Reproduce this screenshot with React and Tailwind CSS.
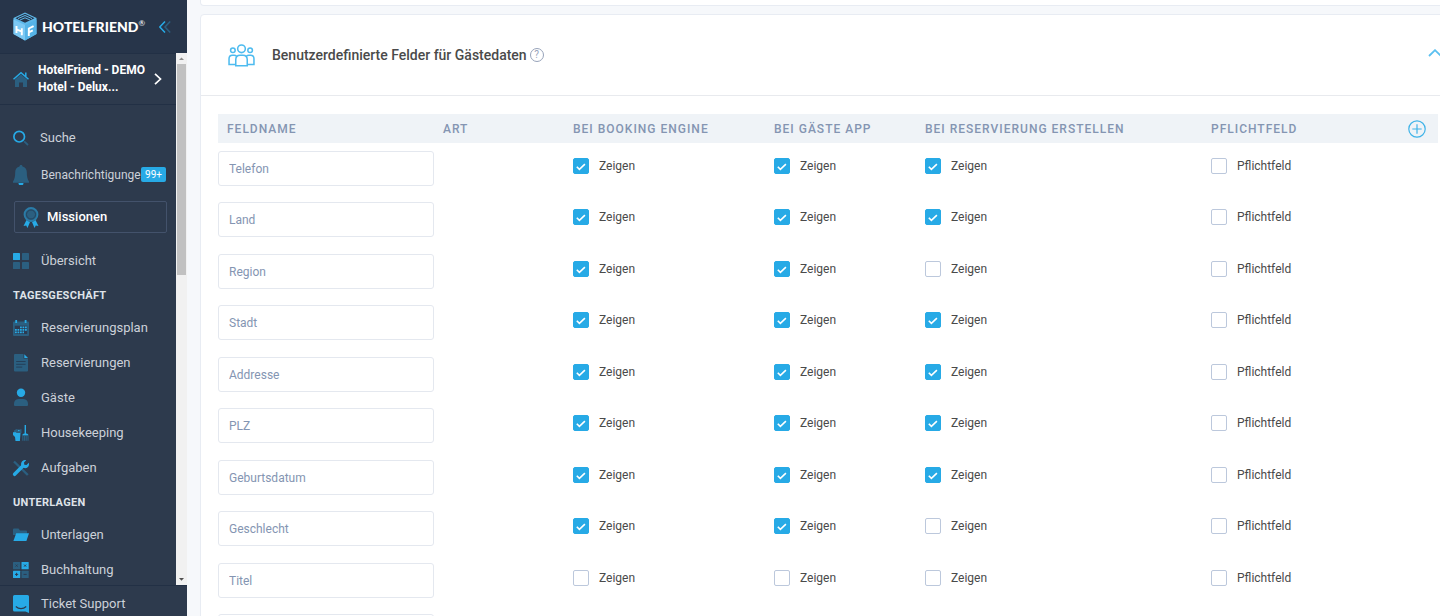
import { useState } from 'react'

const initialFields = [
  { id: 'phone', name: 'Telefon', booking: true, app: true, reservation: true },
  { id: 'country', name: 'Land', booking: true, app: true, reservation: true },
  { id: 'region', name: 'Region', booking: true, app: true, reservation: false },
  { id: 'city', name: 'Stadt', booking: true, app: true, reservation: true },
  { id: 'address', name: 'Addresse', booking: true, app: true, reservation: true },
  { id: 'zip', name: 'PLZ', booking: true, app: true, reservation: true },
  { id: 'birthday', name: 'Geburtsdatum', booking: true, app: true, reservation: true },
  { id: 'gender', name: 'Geschlecht', booking: true, app: true, reservation: false },
  { id: 'title', name: 'Titel', booking: false, app: false, reservation: false }
]

const BRIGHT = '#27aae6'
const DIM = '#2b5f80'

function Icon({ children }) {
  return (
    <svg viewBox="0 0 16 16" fill="none" className="h-4 w-4 shrink-0 overflow-visible" aria-hidden="true">
      {children}
    </svg>
  )
}

const icons = {
  search: (
    <>
      <path d="M11.2 11.4 15 15" stroke={DIM} strokeWidth="1.8" />
      <circle cx="6.2" cy="6.7" r="5.3" stroke={BRIGHT} strokeWidth="1.7" />
    </>
  ),
  overview: (
    <>
      <rect x="0" y="0" width="7" height="7" rx="0.6" fill={BRIGHT} />
      <rect x="9" y="0" width="7" height="7" rx="0.6" fill={DIM} />
      <rect x="0" y="9" width="7" height="7" rx="0.6" fill={DIM} />
      <rect x="9" y="9" width="7" height="7" rx="0.6" fill={DIM} />
    </>
  ),
  calendar: (
    <>
      <path d="M1 1.5h14a1 1 0 0 1 1 1V15a1 1 0 0 1-1 1H1a1 1 0 0 1-1-1V2.5a1 1 0 0 1 1-1Z" fill={DIM} />
      <path d="M1.8 5.7h12.4v8.3H1.8z" fill="#2d3a50" />
      <path d="M3.2 0v3M12.6 0v3" stroke={BRIGHT} strokeWidth="1.8" />
      <path d="M7 7.3h7M2 9.8h12M2 12.3h9" stroke={BRIGHT} strokeWidth="1.8" strokeDasharray="1.8 0.7" />
    </>
  ),
  document: (
    <>
      <path d="M2-1h8.5v4.5H15V15.5a1 1 0 0 1-1 1H2a1 1 0 0 1-1-1V0a1 1 0 0 1 1-1Z" fill={DIM} />
      <path d="M11.3-0.7 15 3h-3.7z" fill={BRIGHT} />
      <path d="M3.2 6.5h9.4M3.2 9.3h9.4M3.2 12.1h6" stroke="#253f58" strokeWidth="1" />
    </>
  ),
  guest: (
    <>
      <circle cx="8" cy="2.8" r="4.2" fill={BRIGHT} />
      <path d="M1 15v-1a5 5 0 0 1 4.5-5h5a5 5 0 0 1 4.5 5v1a1 1 0 0 1-1 1H2a1 1 0 0 1-1-1Z" fill={DIM} />
    </>
  ),
  cleaning: (
    <>
      <path d="M1 5.5 3.5 4l2 .8L8.5 4v4H1Z" fill={DIM} />
      <circle cx="5.8" cy="5.5" r="0.8" fill={BRIGHT} />
      <path d="M0 7.2h3l.5.8h4l-.6 8H2.5L2 12 0 10Z" fill={BRIGHT} />
      <path d="M12.3 0v10" stroke={BRIGHT} strokeWidth="1.4" />
      <path d="M9.3 10.5c0-1.5 1-2 3-2s3.1.5 3.1 2Z" fill={BRIGHT} />
      <path d="M9.8 10.8v5M11.5 10.8v5M13.2 10.8v5M15 10.8v5" stroke={DIM} strokeWidth="1.2" />
    </>
  ),
  tools: (
    <>
      <path d="M1 1.5 14.8 15" stroke={DIM} strokeWidth="2.4" />
      <path d="m1.6 14.3 8-8" stroke={BRIGHT} strokeWidth="3.5" strokeLinecap="round" />
      <path d="M13.2 0.3 11 2.5l.3 2.2 2.2.3 2.3-2.2c.8 2.6-.7 5.3-3.5 5.4-2.6 0-4.6-2.2-4.2-4.7.4-2.5 2.9-4 5.1-3.2Z" fill={BRIGHT} />
    </>
  ),
  folder: (
    <>
      <path d="M0 2.5a1 1 0 0 1 1-1h4.5l1.5 2h6a1 1 0 0 1 1 1V8H0Z" fill={DIM} />
      <path d="M3.2 6.2H16L13.4 14H0.4Z" fill={BRIGHT} />
    </>
  ),
  accounting: (
    <>
      <rect x="0" y="0" width="7.2" height="7.2" rx="0.5" fill={DIM} />
      <rect x="8.5" y="0" width="7.2" height="7.2" rx="0.5" fill={BRIGHT} />
      <rect x="0" y="8.8" width="7.2" height="7.2" rx="0.5" fill={BRIGHT} />
      <rect x="8.5" y="8.8" width="7.2" height="7.2" rx="0.5" fill={DIM} />
      <path d="m2.6 2.6 2 2m0-2-2 2M11.1 2.6l2 2m0-2-2 2M3.6 10.8v3.2M2 12.4h3.2M10.5 12.4h3.2" stroke="#2d3a50" strokeWidth="1" />
    </>
  )
}

const dayItems = [
  { label: 'Reservierungsplan', icon: 'calendar' },
  { label: 'Reservierungen', icon: 'document' },
  { label: 'Gäste', icon: 'guest' },
  { label: 'Housekeeping', icon: 'cleaning' },
  { label: 'Aufgaben', icon: 'tools' }
]

const documentItems = [
  { label: 'Unterlagen', icon: 'folder' },
  { label: 'Buchhaltung', icon: 'accounting' }
]

function NavItem({ label, icon }) {
  return (
    <a href="#" className="flex h-[35px] items-center gap-[11px] pl-[13px] text-[#ccd1d9]">
      <Icon>{icons[icon]}</Icon>
      <span className="pl-px">{label}</span>
    </a>
  )
}

function NavHeading({ children }) {
  return (
    <h2 className="flex h-8 items-center pt-1 pl-[13px] text-[11px] font-bold tracking-wide text-[#dfe3e9]">
      {children}
    </h2>
  )
}

function Logo() {
  return (
    <a href="#" className="flex items-center gap-[5px] text-white">
      <svg viewBox="0 0 24 29" className="h-[29px] w-6" aria-hidden="true">
        <path d="M12 0.5 23.5 6v16L12 28.5.5 22V6Z" fill="#5fb9ea" />
        <path d="M12 1.8 21.5 6.3 12 10.8 2.5 6.3Z" fill="#27354a" />
        <path d="M5 6.6 12 3.5l7 3.1" fill="none" stroke="#5fb9ea" strokeWidth="1" />
        <path d="M7 8 12 5.8 17 8" fill="none" stroke="#5fb9ea" strokeWidth="1" />
        <path d="M0.5 7.5 12 13V28.5L.5 22Z" fill="#7cc8f3" />
        <path d="M23.5 7.5 12 13V28.5L23.5 22Z" fill="#55b3e7" />
        <path d="M3.5 14v7M8.8 16.2v7M3.5 17.4l5.3 2.2" stroke="#fff" strokeWidth="1.9" />
        <path d="M15.8 24v-7.5l4.8-2.4M15.8 20.4l4-2" stroke="#fff" strokeWidth="1.9" fill="none" />
      </svg>
      <span className="flex items-start font-[Lato,sans-serif] text-sm leading-5 font-black">
        HOTELFRIEND
        <span className="text-[8px] leading-3 font-normal">®</span>
      </span>
    </a>
  )
}

function Sidebar() {
  return (
    <aside className="flex w-[187px] shrink-0 flex-col bg-[#2d3a4d] text-[13px]">
      <div className="flex h-[53px] shrink-0 items-center justify-between bg-[#27354a] pr-4 pl-[13px]">
        <Logo />
        <button type="button" aria-label="Menü einklappen">
          <svg viewBox="0 0 12 12" fill="none" className="h-3 w-3">
            <path d="M6 0.5.8 6 6 11.5" stroke={BRIGHT} strokeWidth="1.5" />
            <path d="M11.2 0.5 6 6l5.2 5.5" stroke={DIM} strokeWidth="1.5" />
          </svg>
        </button>
      </div>

      <div className="flex min-h-0 flex-1">
        <div className="min-w-0 flex-1 overflow-hidden">
          <button type="button" className="flex h-[52px] w-full items-center border-y border-[#223045] pl-[13px] text-left text-white">
            <Icon>
              <path d="M2 8.5 8 3.5l6 5V16H10v-4.5H6V16H2Z" fill={DIM} />
              <path d="M0.5 8.3 8 1.7l7.5 6.6M12.8 1.5v4" stroke={BRIGHT} strokeWidth="1.5" />
            </Icon>
            <span className="ml-[9px] flex-1 text-xs leading-[17px] font-bold whitespace-nowrap">
              HotelFriend - DEMO<br />Hotel - Delux...
            </span>
            <svg viewBox="0 0 8 12" fill="none" className="mr-[14px] h-3 w-2" aria-hidden="true">
              <path d="m1 0.8 5.5 5.2L1 11.2" stroke="#fff" strokeWidth="1.7" />
            </svg>
          </button>

          <nav className="pt-[14px]">
            <a href="#" className="flex h-[37px] items-center gap-[11px] pl-[13px] text-[#ccd1d9]">
              <Icon>{icons.search}</Icon>
              Suche
            </a>
            <a href="#" className="relative flex h-[37px] items-center gap-[11px] pl-[13px] text-xs text-[#ccd1d9]">
              <svg viewBox="0 0 16 20" className="h-5 w-4 shrink-0" aria-hidden="true">
                <path d="M5.5 18h5a2.5 2.5 0 0 1-5 0Z" fill={BRIGHT} />
                <path d="M8 0c.9 0 1.5.6 1.5 1.5 2.8.7 4.3 2.8 4.3 5.7 0 4.3.6 6.8 2.2 9.3v1.3H0v-1.3c1.6-2.5 2.2-5 2.2-9.3 0-2.9 1.5-5 4.3-5.7C6.5.6 7.1 0 8 0Z" fill={DIM} />
              </svg>
              <span className="pl-px">Benachrichtigunge</span>
              <span className="absolute right-[10px] rounded-xs bg-[#27aae6] px-1 text-[10px] leading-[15px] text-white">99+</span>
            </a>
            <a href="#" className="mt-2 mr-[9px] mb-[10px] ml-[14px] flex h-8 items-center gap-2 rounded-xs border border-[#43526b] pl-2 font-medium text-white">
              <svg viewBox="0 0 16 21" className="h-[21px] w-4 shrink-0" aria-hidden="true">
                <path d="m3.5 13-3 6 2.7-.5L4.5 21l2.5-6ZM12.5 13l3 6-2.7-.5L11.5 21 9 15Z" fill={BRIGHT} />
                <circle cx="8" cy="7.5" r="6.5" fill="#2b5f80" stroke="#2a7ca8" strokeWidth="1.8" />
                <circle cx="8" cy="7.5" r="4.5" fill="#2b5f80" stroke="#25435e" strokeWidth="1" />
              </svg>
              Missionen
            </a>
            <NavItem label="Übersicht" icon="overview" />

            <NavHeading>TAGESGESCHÄFT</NavHeading>
            {dayItems.map(item => (
              <NavItem key={item.label} {...item} />
            ))}

            <NavHeading>UNTERLAGEN</NavHeading>
            {documentItems.map(item => (
              <NavItem key={item.label} {...item} />
            ))}
          </nav>
        </div>

        {/* scrollbar */}
        <div className="flex w-[11px] flex-col items-center bg-[#f1f1f1]" aria-hidden="true">
          <svg viewBox="0 0 11 11" className="h-[11px] w-[11px]">
            <path d="M3 7h5L5.5 4.5Z" fill="#8b8b8b" />
          </svg>
          <div className="h-[211px] w-[9px] bg-[#c1c1c1]"></div>
          <svg viewBox="0 0 11 11" className="mt-auto h-[11px] w-[11px]">
            <path d="M3 4h5L5.5 6.8Z" fill="#505050" />
          </svg>
        </div>
      </div>

      <a href="#" className="flex h-[31px] shrink-0 items-center gap-[11px] border-t border-[#223045] pt-[5px] pl-[13px] text-[#ccd1d9]">
        <svg viewBox="0 0 16 18" fill="none" className="h-[18px] w-4 shrink-0" aria-hidden="true">
          <path d="M1.5 0h13A1.5 1.5 0 0 1 16 1.5V18l-3.5-1.5h-11A1.5 1.5 0 0 1 0 15V1.5A1.5 1.5 0 0 1 1.5 0Z" fill={BRIGHT} />
          <path d="M2.8 11.5c3 2.7 7.4 2.7 10.4 0" stroke="#2d3a4d" strokeWidth="1.2" />
        </svg>
        <span className="pl-px">Ticket Support</span>
      </a>
    </aside>
  )
}

function Checkbox({ label, checked, onChange }) {
  return (
    <label className="relative flex w-fit cursor-pointer items-start gap-[10px] pt-[7px] leading-4">
      <input
        type="checkbox"
        checked={checked}
        onChange={onChange}
        className="peer h-4 w-4 appearance-none rounded-xs border border-[#bcc8dc] bg-white checked:border-[#27aae6] checked:bg-[#27aae6]"
      />
      <svg viewBox="0 0 16 16" fill="none" className="pointer-events-none absolute left-0 hidden h-4 w-4 peer-checked:block" aria-hidden="true">
        <path d="m3.8 8.8 2.6 2.6 5.5-5.2" stroke="#fff" strokeWidth="1.6" />
      </svg>
      {label}
    </label>
  )
}

function NameInput({ value, onChange }) {
  return (
    <input
      type="text"
      aria-label="Feldname"
      value={value}
      onChange={e => onChange(e.target.value)}
      className="block h-[35px] w-full rounded-[3px] border border-[#e4e8ef] bg-white px-[10px] text-[#8495b2]"
    />
  )
}

function FieldsTable() {
  const [fields, setFields] = useState(initialFields)
  const [newName, setNewName] = useState('')

  const update = (id, key, value) => {
    setFields(prev => prev.map(f => (f.id === id ? { ...f, [key]: value } : f)))
  }

  const toggle = (field, key, label) => (
    <Checkbox label={label} checked={!!field[key]} onChange={e => update(field.id, key, e.target.checked)} />
  )

  return (
    <table className="w-full table-fixed text-left text-xs text-[#4a4a4a]">
      <thead>
        <tr className="h-[29px] bg-[#eff3f7] tracking-[1px] text-[#8495b2]">
          <th className="w-[225px] pl-[9px] font-medium">FELDNAME</th>
          <th className="w-[130px] font-medium">ART</th>
          <th className="w-[201px] font-medium">BEI BOOKING ENGINE</th>
          <th className="w-[151px] font-medium">BEI GÄSTE APP</th>
          <th className="w-[286px] font-medium">BEI RESERVIERUNG ERSTELLEN</th>
          <th className="font-medium">
            <div className="flex items-center justify-between pr-3">
              PFLICHTFELD
              <button type="button" aria-label="Feld hinzufügen">
                <svg viewBox="0 0 18 18" fill="none" stroke="#3fb3e8" strokeWidth="1.2" className="h-[18px] w-[18px]">
                  <circle cx="9" cy="9" r="8.2" />
                  <path d="M9 4.3v9.4M4.3 9h9.4" />
                </svg>
              </button>
            </div>
          </th>
        </tr>
      </thead>
      <tbody className="before:block before:h-2">
        {fields.map(field => (
          <tr key={field.id} className="align-top odd:h-[51px] even:h-[52px]">
            <td className="pr-[9px]">
              <NameInput value={field.name} onChange={value => update(field.id, 'name', value)} />
            </td>
            <td></td>
            <td>{toggle(field, 'booking', 'Zeigen')}</td>
            <td>{toggle(field, 'app', 'Zeigen')}</td>
            <td>{toggle(field, 'reservation', 'Zeigen')}</td>
            <td>{toggle(field, 'required', 'Pflichtfeld')}</td>
          </tr>
        ))}
        <tr className="h-[52px] align-top">
          <td className="pr-[9px]">
            <NameInput value={newName} onChange={setNewName} />
          </td>
          <td colSpan={5}></td>
        </tr>
      </tbody>
    </table>
  )
}

function App() {
  return (
    <div className="flex h-screen overflow-hidden bg-[#f6f8fb] font-[Roboto,sans-serif]">
      <Sidebar />

      <main className="min-w-0 flex-1 overflow-hidden pl-[13px]">
        <div className="-mr-4 h-[6px] rounded-b-sm border border-t-0 border-[#e8ecf3] bg-white"></div>

        <section className="mt-2 -mr-4 rounded-sm border border-[#e8ecf3] bg-white">
          <header className="flex h-[81px] items-center border-b border-[#e8eaee] pr-[13px] pl-[27px]">
            <svg viewBox="0 0 28 24" fill="none" stroke="#4dbbef" strokeWidth="1.6" className="h-[23px] w-[27px]" aria-hidden="true">
              <circle cx="14" cy="5" r="4" />
              <circle cx="5" cy="6.5" r="2.4" />
              <circle cx="23" cy="6.5" r="2.4" />
              <path d="M8 22.8v-6.3c0-3 1.7-4.8 4.5-4.8h3c2.8 0 4.5 1.8 4.5 4.8v6.3Z" />
              <path d="M8 21.3H1v-5.8c0-2.3 1.4-3.7 3.5-3.7h1.8c1 0 1.9.3 2.5.8M20 21.3h7v-5.8c0-2.3-1.4-3.7-3.5-3.7h-1.8c-1 0-1.9.3-2.5.8" />
            </svg>
            <h1 className="ml-[17px] text-sm font-medium text-[#4a4a4a]">Benutzerdefinierte Felder für Gästedaten</h1>
            <button type="button" aria-label="Hilfe" className="ml-[3px] flex h-[14px] w-[14px] items-center justify-center rounded-full border border-[#97a3ba] text-[10px] leading-none text-[#97a3ba]">
              ?
            </button>
            <button type="button" aria-label="Einklappen" className="mb-1 ml-auto">
              <svg viewBox="0 0 14 8" fill="none" className="h-2 w-[14px]">
                <path d="M1 7 7 1.2 13 7" stroke="#5bc0f0" strokeWidth="1.8" />
              </svg>
            </button>
          </header>

          <div className="px-[17px] pt-[18px] pb-4">
            <FieldsTable />
          </div>
        </section>
      </main>
    </div>
  )
}

export default App
